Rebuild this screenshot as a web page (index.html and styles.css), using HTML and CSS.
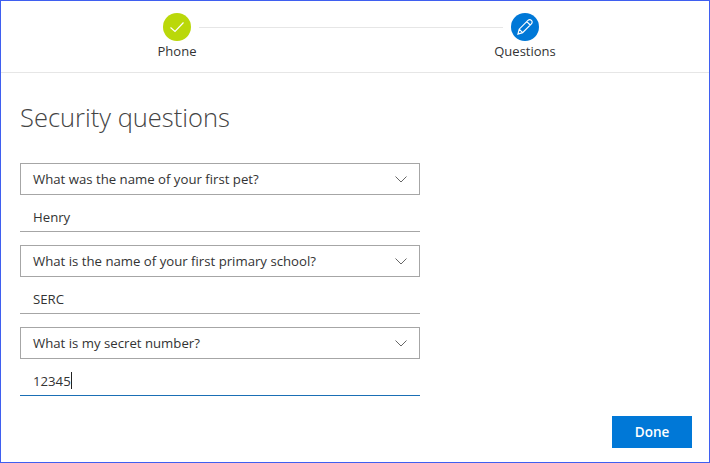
FILE: index.html
```html
<!DOCTYPE html>
<html lang="en">
<head>
  <meta charset="UTF-8" />
  <title>Security questions</title>
  <link rel="stylesheet" href="styles.css">
</head>
<body>
  <div class="window">
    <div class="steps">
      <div class="step-icons">
        <span class="circle done">
          <svg width="16" height="16" viewBox="0 0 16 16"><path d="M1.5 8.5 L6 12.5 L14.5 3.5" fill="none" stroke="#fff" stroke-width="1.2"/></svg>
        </span>
        <span class="step-line"></span>
        <span class="circle current">
          <svg width="18" height="18" viewBox="0 0 18 18"><path d="M2 16 L3.2 11.2 L12 2.4 C13 1.4 14.4 1.4 15.4 2.4 C16.4 3.4 16.4 4.8 15.4 5.8 L6.6 14.6 Z M3.2 11.2 L6.6 14.6 M10.8 3.6 L14.2 7" fill="none" stroke="#fff" stroke-width="1.2"/></svg>
        </span>
      </div>
      <div class="step-labels">
        <span class="step-label">Phone</span>
        <span class="step-label">Questions</span>
      </div>
    </div>

    <div class="content">
      <h1>Security questions</h1>
      <div class="form">
        <div class="select">
          <span>What was the name of your first pet?</span>
          <svg class="chevron" width="12" height="7" viewBox="0 0 12 7"><path d="M0.5 0.5 L6 6 L11.5 0.5" fill="none" stroke="#666" stroke-width="1"/></svg>
        </div>
        <div class="answer">Henry</div>
        <div class="select">
          <span>What is the name of your first primary school?</span>
          <svg class="chevron" width="12" height="7" viewBox="0 0 12 7"><path d="M0.5 0.5 L6 6 L11.5 0.5" fill="none" stroke="#666" stroke-width="1"/></svg>
        </div>
        <div class="answer">SERC</div>
        <div class="select">
          <span>What is my secret number?</span>
          <svg class="chevron" width="12" height="7" viewBox="0 0 12 7"><path d="M0.5 0.5 L6 6 L11.5 0.5" fill="none" stroke="#666" stroke-width="1"/></svg>
        </div>
        <div class="answer active">12345<span class="caret"></span></div>
      </div>
      <div class="actions">
        <button>Done</button>
      </div>
    </div>
  </div>
</body>
</html>
```

FILE: styles.css
```css
body {
  margin: 0;
  background-color: white;
  font-family: "Open Sans", Arial, sans-serif;
  color: #333;
}

.window {
  box-sizing: border-box;
  width: 710px;
  height: 463px;
  border: 1px solid #3f5ff0;
  overflow: hidden;
}

.steps {
  box-sizing: border-box;
  height: 72px;
  padding-top: 12px;
  border-bottom: 1px solid #e6e6e6;
}

.step-icons {
  display: flex;
  align-items: center;
  padding-left: 162px;
}

.circle {
  width: 28px;
  height: 28px;
  border-radius: 50%;
  display: flex;
  justify-content: center;
  align-items: center;
}

.done {
  background-color: #bad80a;
}

.current {
  background-color: #0078d7;
}

.step-line {
  width: 304px;
  height: 1px;
  margin: 0 8px;
  background-color: #e6e6e6;
}

.step-labels {
  display: flex;
  gap: 248px;
  padding-left: 126px;
  margin-top: 1px;
}

.step-label {
  width: 100px;
  text-align: center;
  font-size: 13px;
  line-height: 18px;
}

.content {
  padding: 0 17px 0 19px;
}

h1 {
  margin: 26px 0 0;
  font-size: 25.5px;
  font-weight: 300;
  line-height: 36px;
  color: #444;
}

.form {
  width: 400px;
  margin-top: 28px;
}

.select {
  box-sizing: border-box;
  height: 32px;
  padding: 0 12px;
  border: 1px solid #a6a6a6;
  display: flex;
  justify-content: space-between;
  align-items: center;
  font-size: 13.2px;
}

.answer {
  box-sizing: border-box;
  height: 37px;
  margin-bottom: 13px;
  padding: 7px 13px 0;
  border-bottom: 1px solid #a6a6a6;
  display: flex;
  align-items: center;
  font-size: 13.2px;
  color: #333;
}

.answer.active {
  border-bottom-color: #1a6fb5;
  margin-bottom: 0;
}

.caret {
  width: 1px;
  height: 17px;
  background-color: #222;
}

.actions {
  display: flex;
  justify-content: flex-end;
  margin-top: 20px;
}

button {
  width: 80px;
  height: 32px;
  border: none;
  background-color: #0078d7;
  color: white;
  font-family: inherit;
  font-size: 13.5px;
  font-weight: 600;
}
```
